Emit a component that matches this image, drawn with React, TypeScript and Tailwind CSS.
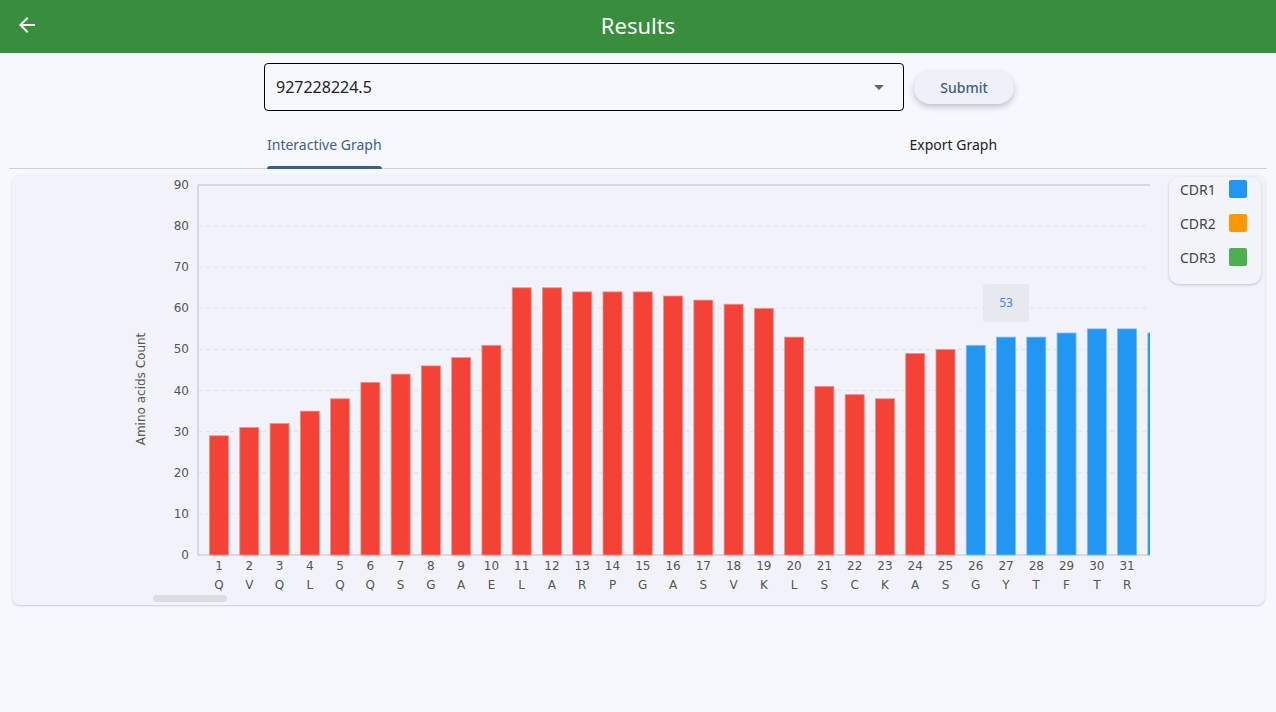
import React from "react";

const data: [number, string, number][] = [
  [1, "Q", 29], [2, "V", 31], [3, "Q", 32], [4, "L", 35], [5, "Q", 38],
  [6, "Q", 42], [7, "S", 44], [8, "G", 46], [9, "A", 48], [10, "E", 51],
  [11, "L", 65], [12, "A", 65], [13, "R", 64], [14, "P", 64], [15, "G", 64],
  [16, "A", 63], [17, "S", 62], [18, "V", 61], [19, "K", 60], [20, "L", 53],
  [21, "S", 41], [22, "C", 39], [23, "K", 38], [24, "A", 49], [25, "S", 50],
  [26, "G", 51], [27, "Y", 53], [28, "T", 53], [29, "F", 54], [30, "T", 55],
  [31, "R", 55], [32, "T", 54],
];

// chart geometry (svg coords, origin at card top-left)
const AX = 186;
const TOP = 11;
const BOT = 381;
const STEP = 30.27;
const BAR_W = 19;
const unit = (BOT - TOP) / 90;

function Chart() {
  const ticks = [0, 10, 20, 30, 40, 50, 60, 70, 80, 90];
  return (
    <svg width={1138} height={431} className="block" style={{ fontFamily: '"DejaVu Sans", sans-serif' }}>
      {/* grid */}
      {ticks.map((t) => {
        const y = BOT - t * unit;
        return (
          <g key={t}>
            {t > 0 && t < 90 && (
              <line x1={AX} x2={1138} y1={y} y2={y} stroke="#e2e3e8" strokeDasharray="4 4" />
            )}
            <text x={177} y={y + 4} fontSize={12} fill="#555" textAnchor="end">
              {t}
            </text>
          </g>
        );
      })}
      <line x1={AX} x2={1138} y1={TOP} y2={TOP} stroke="#cfd0d4" strokeWidth={1.5} />
      <line x1={AX} x2={AX} y1={TOP} y2={BOT} stroke="#cfd0d4" strokeWidth={1.5} />
      <line x1={AX} x2={1138} y1={BOT} y2={BOT} stroke="#cfd0d4" strokeWidth={1.5} />

      {/* bars */}
      {data.map(([n, aa, v], i) => {
        const cx = 207 + i * STEP;
        const h = v * unit;
        const color = n >= 26 ? "#2196f3" : "#f44336";
        const stroke = n >= 26 ? "#7cc0f8" : "#f88e86";
        return (
          <g key={n}>
            <rect x={cx - BAR_W / 2} y={BOT - h} width={BAR_W} height={h} fill={color} stroke={stroke} strokeWidth={0.8} />
            <text x={cx} y={396} fontSize={12} fill="#555" textAnchor="middle">
              {n}
            </text>
            <text x={cx} y={415} fontSize={12} fill="#555" textAnchor="middle">
              {aa}
            </text>
          </g>
        );
      })}

      <text
        x={0}
        y={0}
        fontSize={12}
        fill="#555"
        textAnchor="middle"
        transform="translate(133 215) rotate(-90)"
      >
        Amino acids Count
      </text>
    </svg>
  );
}

export default function App() {
  return (
    <div
      className="w-[1276px] h-[712px] bg-[#f7f8fd] overflow-hidden"
      style={{ fontFamily: '"Noto Sans", "Open Sans", sans-serif' }}
    >
      {/* Header */}
      <header className="relative h-[53px] bg-[#388e3c] flex items-center justify-center pb-[3px]">
        <svg viewBox="0 0 24 24" width={24} height={24} className="absolute left-[15px] top-[13px]" fill="#ffffff">
          <path d="M20 11H7.83l5.59-5.59L12 4l-8 8 8 8 1.41-1.41L7.83 13H20v-2z" />
        </svg>
        <h1 className="text-[22px] text-white leading-none">Results</h1>
      </header>

      {/* Select row */}
      <div className="flex items-center mt-[10px] ml-[264px]">
        <div className="w-[640px] h-[48px] border border-black rounded-[4px] flex items-center justify-between pl-[11px] pr-[12px]">
          <span className="text-[16px] text-[#222]">927228224.5</span>
          <svg viewBox="0 0 24 24" width={24} height={24} fill="#666">
            <path d="M7 10l5 5 5-5z" />
          </svg>
        </div>
        <button className="ml-[10px] w-[100px] h-[33px] rounded-full bg-[#f0f1f8] text-[#3d5f8c] text-[14px] font-medium shadow-[0_3px_6px_rgba(0,0,0,0.22)]">
          Submit
        </button>
      </div>

      {/* Tabs */}
      <div className="mt-[10px] mx-[9px] h-[48px] border-b border-[#cfd0d4] flex items-stretch">
        <div className="ml-[258px] relative flex items-center">
          <span className="text-[14px] text-[#3d5f8c]">Interactive Graph</span>
          <div className="absolute left-0 right-0 bottom-[-1px] h-[3px] rounded-t bg-[#3d5f8c]" />
        </div>
        <div className="ml-[528px] flex items-center">
          <span className="text-[14px] text-[#222]">Export Graph</span>
        </div>
      </div>

      {/* Chart card */}
      <div className="relative mt-[5px] ml-[12px] w-[1253px] h-[431px] rounded-[8px] bg-[#f2f3fa] shadow-[0_1px_2px_rgba(0,0,0,0.18)] overflow-hidden">
        <div className="w-[1138px] overflow-hidden">
          <Chart />
        </div>

        {/* tooltip */}
        <div className="absolute left-[971px] top-[110px] w-[46px] h-[38px] rounded-[3px] bg-[#e8e9ee] flex items-center justify-center text-[12px] text-[#3b8fe0]">
          53
        </div>

        {/* legend */}
        <div className="absolute left-[1157px] top-[3px] w-[92px] h-[107px] rounded-[10px] bg-[#f3f4fa] shadow-[0_1px_3px_rgba(0,0,0,0.2)] flex flex-col gap-[16px] pl-[11px] pt-[3px]">
          {[
            ["CDR1", "bg-[#2196f3]"],
            ["CDR2", "bg-[#ff9800]"],
            ["CDR3", "bg-[#4caf50]"],
          ].map(([label, c]) => (
            <div key={label} className="flex items-center h-[18px]">
              <span className="text-[14px] text-[#444] w-[49px]">{label}</span>
              <span className={`w-[18px] h-[18px] rounded-[2px] ${c}`} />
            </div>
          ))}
        </div>

        {/* scrollbar */}
        <div className="absolute left-[141px] top-[421px] w-[74px] h-[7px] rounded-full bg-[#dcdde3]" />
      </div>
    </div>
  );
}
